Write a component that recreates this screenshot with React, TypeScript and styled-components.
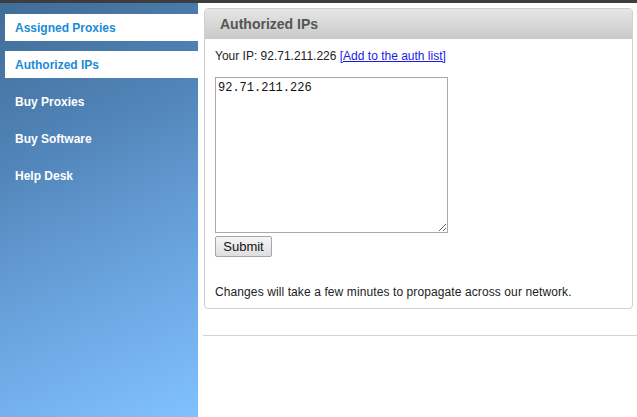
import React from "react";
import styled, { createGlobalStyle } from "styled-components";

const GlobalStyle = createGlobalStyle`
  html, body { margin: 0; padding: 0; background: #fff; }
  body { font-family: "Liberation Sans", Arial, sans-serif; font-size: 12px; color: #222; }
`;

const Page = styled.div`
  display: flex;
  flex-direction: column;
  width: 637px;
  height: 417px;
  overflow: hidden;
`;

const TopBar = styled.div`
  height: 3px;
  background: #3d3d3d;
  flex: none;
`;

const Main = styled.div`
  display: flex;
  flex: 1;
`;

const Sidebar = styled.nav`
  width: 198px;
  flex: none;
  padding-top: 11px;
  box-sizing: border-box;
  background: linear-gradient(155deg, #416d98 0%, #4f82b5 30%, #669fd8 60%, #80c1ff 100%);
  display: flex;
  flex-direction: column;
  gap: 10px;
`;

const NavItem = styled.a<{ $active?: boolean }>`
  display: block;
  margin-left: 5px;
  height: 27px;
  line-height: 28px;
  padding-left: 10px;
  font-weight: bold;
  font-size: 12px;
  text-decoration: none;
  background: ${(p) => (p.$active ? "#fff" : "transparent")};
  color: ${(p) => (p.$active ? "#1b8bd6" : "#fff")};
`;

const Content = styled.div`
  flex: 1;
  padding: 5px 4px 0 6px;
  display: flex;
  flex-direction: column;
`;

const Panel = styled.section`
  border: 1px solid #cfcfcf;
  border-radius: 4px;
  overflow: hidden;
`;

const PanelHeader = styled.h2`
  margin: 0;
  height: 30px;
  line-height: 30px;
  padding-left: 15px;
  font-size: 14px;
  font-weight: bold;
  color: #555;
  background: linear-gradient(#e6e6e6, #c9c9c9);
`;

const PanelBody = styled.div`
  padding: 10px 10px 9px 10px;
`;

const IpLine = styled.div`
  line-height: 14px;
  color: #222;
`;

const Link = styled.a`
  color: #1a1ae6;
  text-decoration: underline;
`;

const IpArea = styled.textarea`
  display: block;
  margin-top: 14px;
  width: 233px;
  height: 156px;
  box-sizing: border-box;
  border: 1px solid #a9a9a9;
  padding: 3px 2px;
  font-family: "Liberation Mono", "Courier New", monospace;
  font-size: 12px;
  line-height: 14px;
  color: #111;
  resize: both;
  outline: none;
`;

const SubmitButton = styled.button`
  display: block;
  margin-top: 3px;
  width: 57px;
  height: 21px;
  padding: 0;
  font-family: "Liberation Sans", Arial, sans-serif;
  font-size: 13px;
  color: #111;
  border: 1px solid #a6a6a6;
  border-radius: 2px;
  background: linear-gradient(#f6f6f6, #dedede);
`;

const Note = styled.p`
  margin: 28px 0 0 0;
  line-height: 14px;
  letter-spacing: 0.1px;
`;

const Divider = styled.hr`
  margin: 26px -4px 0 -1px;
  border: none;
  border-top: 1px solid #d4d4d4;
  height: 0;
`;

export default function App() {
  return (
    <>
      <GlobalStyle />
      <Page>
        <TopBar />
        <Main>
          <Sidebar>
            <NavItem $active>Assigned Proxies</NavItem>
            <NavItem $active>Authorized IPs</NavItem>
            <NavItem>Buy Proxies</NavItem>
            <NavItem>Buy Software</NavItem>
            <NavItem>Help Desk</NavItem>
          </Sidebar>
          <Content>
            <Panel>
              <PanelHeader>Authorized IPs</PanelHeader>
              <PanelBody>
                <IpLine>
                  Your IP: 92.71.211.226 <Link href="#">[Add to the auth list]</Link>
                </IpLine>
                <IpArea defaultValue="92.71.211.226" />
                <SubmitButton>Submit</SubmitButton>
                <Note>Changes will take a few minutes to propagate across our network.</Note>
              </PanelBody>
            </Panel>
            <Divider />
          </Content>
        </Main>
      </Page>
    </>
  );
}
